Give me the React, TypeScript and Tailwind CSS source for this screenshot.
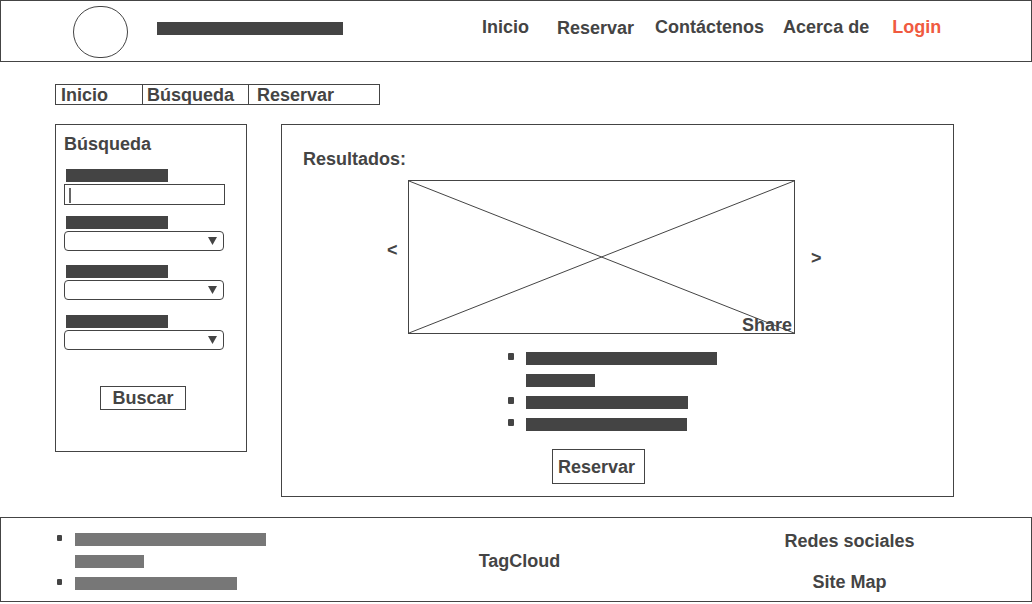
const navItems = [
  { label: "Inicio", className: "ml-[139px] mt-[16px]" },
  { label: "Reservar", className: "ml-[28px] mt-[17px]" },
  { label: "Contáctenos", className: "ml-[21px] mt-[16px]" },
  { label: "Acerca de", className: "ml-[19px] mt-[16px]" },
  { label: "Login", className: "ml-[23px] mt-[16px] text-[#f05a40]" },
]

const results = [
  { width: "w-[191px]", bullet: true },
  { width: "w-[69px]", bullet: false },
  { width: "w-[162px]", bullet: true },
  { width: "w-[161px]", bullet: true },
]

const footerLinks = [
  { width: "w-[191px]", bullet: true },
  { width: "w-[69px]", bullet: false },
  { width: "w-[162px]", bullet: true },
]

function Select() {
  return (
    <div className="mt-[2px] flex h-[20px] w-[160px] items-center justify-end rounded-[4px] border border-[#444] pr-[6px]">
      <svg width="9" height="8" viewBox="0 0 9 8">
        <polygon points="0,0 9,0 4.5,8" fill="#444" />
      </svg>
    </div>
  )
}

function Label({ className = "" }: { className?: string }) {
  return <div className={`ml-[2px] h-[13px] w-[102px] bg-[#444] ${className}`} />
}

export default function App() {
  return (
    <div className="h-[604px] w-[1032px] overflow-hidden bg-white font-['Liberation_Sans',Arial,sans-serif] text-[18px] font-bold leading-[20px] text-[#444]">
      {/* top bar */}
      <header className="flex h-[62px] items-start border border-[#444]">
        <div className="ml-[72px] mt-[5px] h-[52px] w-[55px] rounded-full border border-[#444]" />
        <div className="ml-[29px] mt-[21px] h-[13px] w-[186px] bg-[#444]" />
        {navItems.map((item) => (
          <span key={item.label} className={`whitespace-nowrap ${item.className}`}>
            {item.label}
          </span>
        ))}
      </header>

      {/* breadcrumb */}
      <div className="ml-[55px] mt-[22px] flex h-[21px] w-[325px] items-start border border-[#444]">
        <span className="w-[86px] pl-[5px] leading-[21px]">Inicio</span>
        <span className="h-full w-[106px] border-l border-[#444] pl-[4px] leading-[21px]">Búsqueda</span>
        <span className="h-full w-[131px] border-l border-[#444] pl-[8px] leading-[21px]">Reservar</span>
      </div>

      <div className="mt-[19px] flex items-start">
        {/* search panel */}
        <aside className="ml-[55px] flex h-[328px] w-[192px] flex-col items-start border border-[#444] pl-[8px] pt-[9px]">
          <h2>Búsqueda</h2>
          <Label className="mt-[15px]" />
          <div className="mt-[2px] h-[21px] w-[161px] border border-[#444] pl-[4px] pt-[3px]">
            <div className="h-[15px] w-[2px] bg-[#666]" />
          </div>
          <Label className="mt-[11px]" />
          <Select />
          <Label className="mt-[14px]" />
          <Select />
          <Label className="mt-[15px]" />
          <Select />
          <button className="ml-[36px] mt-[36px] h-[24px] w-[86px] border border-[#444] text-center leading-[22px]">
            Buscar
          </button>
        </aside>

        {/* results panel */}
        <main className="ml-[34px] flex h-[373px] w-[673px] flex-col items-start border border-[#444] pl-[21px] pt-[24px]">
          <h2>Resultados:</h2>
          <div className="ml-[84px] mt-[11px] flex items-start">
            <span className="mt-[60px] w-[21px]">&lt;</span>
            <div className="relative h-[154px] w-[387px] border border-[#444]">
              <svg className="absolute inset-0 h-full w-full" viewBox="0 0 385 152" preserveAspectRatio="none">
                <line x1="0" y1="0" x2="385" y2="152" stroke="#444" strokeWidth="1" />
                <line x1="0" y1="152" x2="385" y2="0" stroke="#444" strokeWidth="1" />
              </svg>
              <span className="absolute bottom-[-2px] right-[2px]">Share</span>
            </div>
            <span className="ml-[16px] mt-[68px]">&gt;</span>
          </div>
          <ul className="ml-[205px] mt-[18px] flex flex-col gap-[9px]">
            {results.map((row, i) => (
              <li key={i} className="flex items-start">
                <span className={`mt-[1px] h-[7px] w-[6px] rounded-[1px] bg-[#444] ${row.bullet ? "" : "invisible"}`} />
                <span className={`ml-[12px] h-[13px] bg-[#444] ${row.width}`} />
              </li>
            ))}
          </ul>
          <button className="ml-[249px] mt-[18px] h-[35px] w-[93px] border border-[#444] pl-[5px] text-left">
            Reservar
          </button>
        </main>
      </div>

      {/* footer */}
      <footer className="mt-[20px] flex h-[85px] w-[1032px] items-start border border-[#444]">
        <ul className="flex w-[300px] shrink-0 flex-col gap-[9px] pl-[56px] pt-[15px]">
          {footerLinks.map((row, i) => (
            <li key={i} className="flex items-start">
              <span className={`mt-[2px] h-[6px] w-[5px] rounded-[1px] bg-[#444] ${row.bullet ? "" : "invisible"}`} />
              <span className={`ml-[13px] h-[13px] bg-[#777] ${row.width}`} />
            </li>
          ))}
        </ul>
        <div className="w-[437px] shrink-0 pt-[33px] text-center">TagCloud</div>
        <div className="flex w-[223px] shrink-0 flex-col items-center pt-[13px]">
          <span className="whitespace-nowrap">Redes sociales</span>
          <span className="mt-[21px] whitespace-nowrap">Site Map</span>
        </div>
      </footer>
    </div>
  )
}
